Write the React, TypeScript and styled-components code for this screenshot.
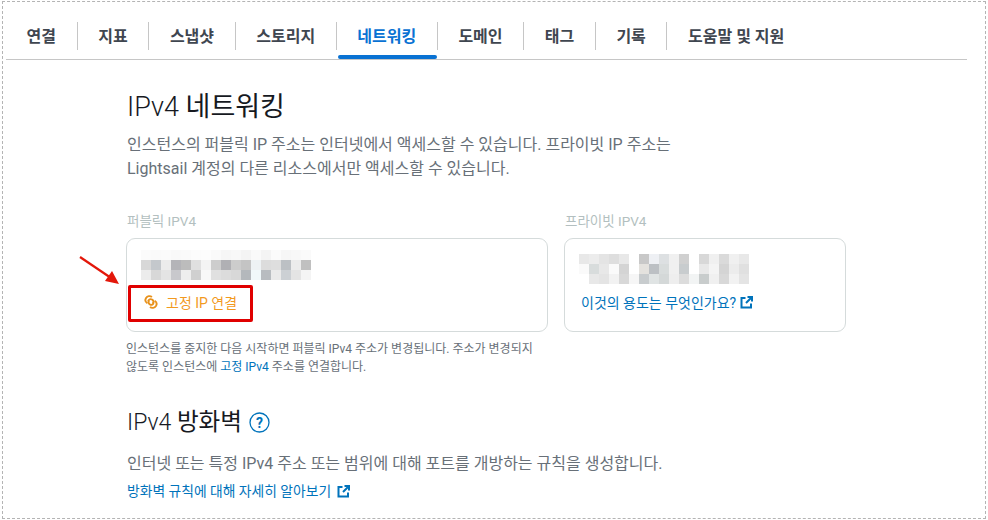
import React from 'react';
import styled, { createGlobalStyle } from 'styled-components';

const GlobalStyle = createGlobalStyle`
  html, body {
    margin: 0;
    padding: 0;
    background: #fff;
    overflow: hidden;
  }
  body {
    font-family: Roboto, "Noto Sans CJK KR", sans-serif;
  }
`;

const Frame = styled.div`
  box-sizing: border-box;
  width: 984px;
  height: 518px;
  margin: 1px 0 0 2px;
  border: 1px dashed #b4b4b4;
  padding: 20px 18px 0 3px;
  overflow: hidden;
`;

const TabBar = styled.nav`
  display: flex;
  height: 37px;
  border-bottom: 1px solid #c6c6c6;
`;

const Tab = styled.div<{ $active?: boolean; $last?: boolean }>`
  position: relative;
  box-sizing: border-box;
  height: 28px;
  padding: 0 20.6px 2px;
  display: flex;
  align-items: center;
  font-size: 16px;
  font-weight: 700;
  white-space: nowrap;
  color: ${({ $active }) => ($active ? '#0972d3' : '#3f4650')};
  border-right: ${({ $last }) => ($last ? 'none' : '1px solid #c6c6c6')};

  ${({ $active }) =>
    $active &&
    `
    &::after {
      content: '';
      position: absolute;
      left: 1px;
      right: 0;
      bottom: -9px;
      height: 4px;
      border-radius: 2px;
      background: #0972d3;
    }
  `}
`;

const Content = styled.main`
  padding: 29px 0 0 121px;
`;

const Heading = styled.h1`
  margin: 0;
  font-size: 27px;
  line-height: 36px;
  font-weight: 300;
  color: #16191f;
`;

const SubHeading = styled.h2`
  display: flex;
  align-items: center;
  gap: 7px;
  margin: 30px 0 0;
  font-size: 23px;
  line-height: 32px;
  font-weight: 300;
  color: #16191f;
`;

const HeadingHangul = styled.span`
  font-weight: 400;
`;

const SubHeadingHangul = styled(HeadingHangul)`
  font-size: 23.6px;
`;

const Lead = styled.p`
  margin: 8px 0 0;
  font-size: 16px;
  line-height: 24px;
  color: #687078;
`;

const CardRow = styled.div`
  display: flex;
  gap: 16px;
  margin-top: 31px;
  margin-left: -1px;
`;

const Column = styled.section<{ $width: number }>`
  width: ${({ $width }) => $width}px;
`;

const Label = styled.div`
  margin-left: 1px;
  font-size: 13.5px;
  line-height: 18px;
  color: #b3bfc0;
  margin-bottom: 8px;
`;

const Card = styled.div`
  box-sizing: border-box;
  height: 94px;
  border: 1px solid #d5dbdb;
  border-radius: 9px;
  padding: 11px 0 0 14px;
`;

const Mosaic = styled.svg<{ $top: number }>`
  display: block;
  margin-top: ${({ $top }) => $top}px;
  filter: blur(0.5px);
`;

const CardLink = styled.a<{ $tone: 'orange' | 'blue' }>`
  position: relative;
  display: flex;
  align-items: center;
  gap: 8px;
  height: 20px;
  font-size: 14px;
  color: ${({ $tone }) => ($tone === 'orange' ? '#f29a1f' : '#0073bb')};
`;

const AttachLink = styled(CardLink)`
  margin: 12px 0 0 3px;
`;

const InfoLink = styled(CardLink)`
  margin: 8px 0 0 2px;
  gap: 4px;
`;

const Highlight = styled.span`
  position: absolute;
  left: -16px;
  top: -7px;
  width: 125px;
  height: 37px;
  box-sizing: border-box;
  border: 3px solid #e00000;
  border-radius: 2px;
`;

const Arrow = styled.svg`
  position: absolute;
  left: -66px;
  top: -37px;
`;

const Note = styled.p`
  margin: 8px 0 0;
  width: 422px;
  font-size: 12px;
  line-height: 18px;
  color: #687078;
`;

const NoteLink = styled.a`
  color: #0073bb;
`;

const FirewallText = styled.p`
  margin: 13px 0 0;
  font-size: 16px;
  line-height: 24px;
  color: #687078;
`;

const LearnLink = styled.a`
  display: flex;
  align-items: center;
  gap: 6px;
  margin-top: 5px;
  font-size: 13.8px;
  line-height: 20px;
  color: #0073bb;
`;

const publicCells = [
  ['#fbfbfb', '#fafafa', '#fbfbfb', '#f9f9f9', '#fafafa', '#fcfcfc', '#fdfdfd', '#fafafa', '#f6f6f6', '#f8f8f8', '#f4f4f4', '#fafafa', '#f4f4f4', '#fbfbfb', '#f6f6f6', '#f8f8f8', '#fafafa'],
  ['#d8d8d8', '#c4c8cc', '#ececec', '#b4b4b8', '#bcbcbc', '#e0e0e0', '#f4f4f4', '#cdcdcd', '#b0b0b4', '#cccccc', '#c4c4c4', '#eef2f4', '#dcdcdc', '#dedede', '#bcc0c4', '#ececec', '#c0c0c0'],
  ['#ececec', '#d8d8d8', '#e4e4e4', '#c8c8cc', '#eeeeee', '#d0d0d0', '#f8f8f8', '#e0e0e0', '#dcdcdc', '#d8d8d8', '#b4b8bc', '#f0f8fa', '#b8bcc0', '#eaeaea', '#ccd0d4', '#e4e4e4', '#f4f4f4'],
];

const privateCells = [
  ['#e8e8e8', '#ececec', '#e4e4e4', '#dedede', '#e8e8e8', '#ffffff', '#c8c8c8', '#eef0f4', '#dde0e2', '#f0f0f0', '#d0d0d0', '#ffffff', '#d8d8d8', '#f0f0f0', '#dadada', '#f0f0f0', '#e8e8e8'],
  ['#fafafa', '#d8dcdc', '#e8e8e8', '#fafafa', '#d4d4d4', '#ffffff', '#e4e2de', '#bcc0c4', '#d8dcdc', '#f0f0f0', '#c8ccce', '#ffffff', '#e8e8e8', '#f4f4f4', '#d4d4d4', '#ececec', '#e0e0e0'],
  ['#ffffff', '#e8e8e8', '#e4e4e4', '#f2f2f2', '#d8d8d8', '#f6f6f6', '#c8ccce', '#e0e4e4', '#d4d8d8', '#eeeeee', '#dcdcdc', '#f2f4f4', '#c8cccc', '#f0f0f0', '#d8d8d8', '#f2f2f2', '#e4e4e4'],
];

const Pixelated: React.FC<{ rows: string[][]; top?: number }> = ({ rows, top = 0 }) => (
  <Mosaic $top={top} width="170" height="30" viewBox="0 0 170 30">
    {rows.map((row, y) =>
      row.map((fill, x) => <rect key={`${x}-${y}`} x={x * 10} y={y * 10} width="10" height="10" fill={fill} />)
    )}
  </Mosaic>
);

const ExternalIcon = () => (
  <svg width="13" height="13" viewBox="0 0 13 13" fill="none" stroke="#0073bb" strokeWidth="2">
    <path d="M5.5 2H1.5V11.5H11V7.5" />
    <path d="M6 7L11.5 1.5M7.5 1H12V5.5" />
  </svg>
);

const LinkChainIcon = () => (
  <svg width="14" height="14" viewBox="0 0 15 15" fill="none" stroke="#e8921c" strokeWidth="2">
    <path d="M8.5 2.2C6.5 .6 3.5 1 2.2 3.2C1 5.2 1.6 7.6 3.6 8.8" />
    <path d="M4.5 6.6C5 4.6 7 3.8 8.6 4.8C10.2 5.8 10.6 7.6 9.6 9.2" />
    <path d="M10.2 8.2C10 10.2 8 11.2 6.4 10.2C4.8 9.2 4.4 7.6 5.2 6" />
    <path d="M6.4 12.8C8.4 14.4 11.4 14 12.8 11.8C14 9.8 13.4 7.4 11.4 6.2" />
  </svg>
);

const HelpIcon = () => (
  <svg width="21" height="21" viewBox="0 0 21 21" fill="none">
    <circle cx="10.5" cy="10.5" r="9.5" stroke="#0073bb" strokeWidth="1.3" />
    <text x="10.5" y="15.5" textAnchor="middle" fontSize="14" fontWeight="700" fontFamily="Roboto, sans-serif" fill="#0073bb">
      ?
    </text>
  </svg>
);

const tabs = ['연결', '지표', '스냅샷', '스토리지', '네트워킹', '도메인', '태그', '기록', '도움말 및 지원'];

const App: React.FC = () => {
  return (
    <Frame>
      <GlobalStyle />
      <TabBar>
        {tabs.map((tab, i) => (
          <Tab key={tab} $active={tab === '네트워킹'} $last={i === tabs.length - 1}>
            {tab}
          </Tab>
        ))}
      </TabBar>

      <Content>
        <Heading>
          IPv4 <HeadingHangul>네트워킹</HeadingHangul>
        </Heading>
        <Lead>
          인스턴스의 퍼블릭 IP 주소는 인터넷에서 액세스할 수 있습니다. 프라이빗 IP 주소는
          <br />
          Lightsail 계정의 다른 리소스에서만 액세스할 수 있습니다.
        </Lead>

        <CardRow>
          <Column $width={422}>
            <Label>퍼블릭 IPV4</Label>
            <Card>
              <Pixelated rows={publicCells} />
              <AttachLink $tone="orange">
                <Highlight />
                <Arrow width="44" height="32" viewBox="0 0 44 32">
                  <path d="M2 2L36 25" stroke="#e3170a" strokeWidth="2.2" />
                  <path d="M41 29L27 26L34 16Z" fill="#e3170a" />
                </Arrow>
                <LinkChainIcon />
                고정 IP 연결
              </AttachLink>
            </Card>
            <Note>
              인스턴스를 중지한 다음 시작하면 퍼블릭 IPv4 주소가 변경됩니다. 주소가 변경되지
              <br />
              않도록 인스턴스에 <NoteLink>고정 IPv4</NoteLink> 주소를 연결합니다.
            </Note>
          </Column>

          <Column $width={282}>
            <Label>프라이빗 IPV4</Label>
            <Card>
              <Pixelated rows={privateCells} top={4} />
              <InfoLink $tone="blue">
                이것의 용도는 무엇인가요?
                <ExternalIcon />
              </InfoLink>
            </Card>
          </Column>
        </CardRow>

        <SubHeading>
          <span>
            IPv4 <SubHeadingHangul>방화벽</SubHeadingHangul>
          </span>
          <HelpIcon />
        </SubHeading>
        <FirewallText>인터넷 또는 특정 IPv4 주소 또는 범위에 대해 포트를 개방하는 규칙을 생성합니다.</FirewallText>
        <LearnLink>
          방화벽 규칙에 대해 자세히 알아보기
          <ExternalIcon />
        </LearnLink>
      </Content>
    </Frame>
  );
};

export default App;
